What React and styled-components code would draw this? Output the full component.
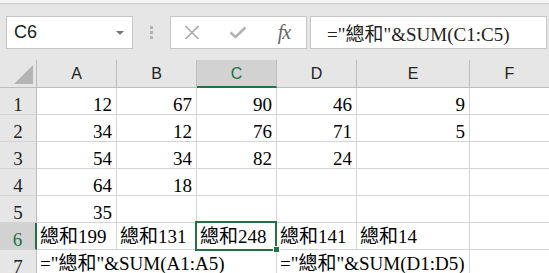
import React from "react";
import styled, { createGlobalStyle, css } from "styled-components";

const GlobalStyle = createGlobalStyle`
  html, body {
    margin: 0;
    padding: 0;
    background: #e6e6e6;
  }
  #root {
    width: 549px;
    height: 273px;
    overflow: hidden;
  }
`;

const GREEN = "#217346";
const GRID = "#d4d4d4";
const HEAD_LINE = "#bdbdbd";

const Window = styled.div`
  width: 549px;
  height: 273px;
  overflow: hidden;
  background: #e6e6e6;
  display: flex;
  flex-direction: column;
`;

const TopStrip = styled.div`
  height: 3px;
  flex: none;
  background: #f3f3f3;
  box-shadow: 0 1px 1px rgba(0, 0, 0, 0.12);
`;

const Toolbar = styled.div`
  height: 57px;
  flex: none;
  box-sizing: border-box;
  padding: 13px 2px 11px 6px;
  display: flex;
  align-items: stretch;
`;

const NameBox = styled.div`
  width: 127px;
  box-sizing: border-box;
  border: 1px solid #c6c6c6;
  background: #fff;
  display: flex;
  align-items: center;
  justify-content: space-between;
  padding: 0 8px 0 7px;
  font-family: "Liberation Sans", sans-serif;
  font-size: 18px;
  color: #222;
`;

const Caret = styled.span`
  width: 0;
  height: 0;
  border-left: 4px solid transparent;
  border-right: 4px solid transparent;
  border-top: 4px solid #777;
  margin-top: 1px;
`;

const Grip = styled.div`
  width: 3px;
  margin: 0 17px;
  display: flex;
  flex-direction: column;
  justify-content: center;
  gap: 2px;
`;

const Dot = styled.span`
  width: 3px;
  height: 3px;
  background: #b3b3b3;
`;

const FxBox = styled.div`
  width: 137px;
  box-sizing: border-box;
  border: 1px solid #c6c6c6;
  background: #fff;
  display: flex;
  align-items: center;
  padding-left: 9px;
  gap: 22px;
`;

const IconSlot = styled.span`
  width: 24px;
  display: flex;
  justify-content: center;
  align-items: center;
`;

const FxLabel = styled.span`
  font-family: "Liberation Serif", serif;
  font-style: italic;
  font-size: 20px;
  color: #666;
  letter-spacing: -1px;
  line-height: 1;
  margin-bottom: 2px;
`;

const FormulaInput = styled.div`
  flex: 1;
  margin-left: 3px;
  box-sizing: border-box;
  border: 1px solid #c6c6c6;
  background: #fff;
  display: flex;
  align-items: center;
  padding-left: 16px;
  font-family: "Liberation Serif", "Noto Sans CJK TC", serif;
  font-size: 19px;
  color: #222;
  white-space: nowrap;
`;

const Sheet = styled.div`
  flex: none;
  display: grid;
  grid-template-columns: 37px 80px 80px 80px 80px 113px 80px;
  grid-template-rows: 28px repeat(7, 27px);
  width: 550px;
  background: #fff;
`;

const Corner = styled.div`
  background: #e6e6e6;
  border-right: 1px solid ${HEAD_LINE};
  border-bottom: 1px solid ${HEAD_LINE};
  display: flex;
  align-items: flex-end;
  justify-content: flex-end;
  padding: 0 3px 3px 0;
`;

const ColHead = styled.div`
  background: ${(p) => (p.$active ? "#d2d2d2" : "#e6e6e6")};
  border-right: 1px solid ${HEAD_LINE};
  border-bottom: ${(p) => (p.$active ? `2px solid ${GREEN}` : `1px solid ${HEAD_LINE}`)};
  display: flex;
  align-items: center;
  justify-content: center;
  padding-top: 1px;
  font-family: "Liberation Sans", sans-serif;
  font-size: 16px;
  color: ${(p) => (p.$active ? GREEN : "#222")};
`;

const RowHead = styled.div`
  background: ${(p) => (p.$active ? "#d2d2d2" : "#e6e6e6")};
  border-right: ${(p) => (p.$active ? `2px solid ${GREEN}` : `1px solid ${HEAD_LINE}`)};
  border-bottom: 1px solid ${GRID};
  display: flex;
  align-items: flex-end;
  justify-content: center;
  font-family: "Liberation Serif", serif;
  font-size: 19px;
  line-height: 19px;
  color: ${(p) => (p.$active ? GREEN : "#222")};
`;

const Cell = styled.div`
  position: relative;
  border-right: ${(p) => (p.$open ? "none" : `1px solid ${GRID}`)};
  border-bottom: 1px solid ${GRID};
  display: flex;
  align-items: flex-end;
  justify-content: ${(p) => (p.$num ? "flex-end" : "flex-start")};
  padding: 0 ${(p) => (p.$num ? "4px" : "3px")} ${(p) => (p.$cjk ? "3px" : "0")};
  font-family: "Liberation Serif", "Noto Sans CJK TC", serif;
  font-size: 19px;
  line-height: 19px;
  color: #000;
  white-space: nowrap;
  overflow: visible;
  min-width: 0;
  ${(p) =>
    p.$selected &&
    css`
      &::after {
        content: "";
        position: absolute;
        top: -2px;
        left: -2px;
        right: -1px;
        bottom: -2px;
        border: 2px solid ${GREEN};
        pointer-events: none;
      }
      &::before {
        content: "";
        position: absolute;
        right: -4px;
        bottom: -4px;
        width: 5px;
        height: 5px;
        background: ${GREEN};
        border: 1px solid #fff;
        z-index: 2;
      }
    `}
`;

const CellText = styled.span`
  position: relative;
  z-index: 1;
`;

const columns = ["A", "B", "C", "D", "E", "F"];

const rows = [
  ["12", "67", "90", "46", "9", ""],
  ["34", "12", "76", "71", "5", ""],
  ["54", "34", "82", "24", "", ""],
  ["64", "18", "", "", "", ""],
  ["35", "", "", "", "", ""],
  ["總和199", "總和131", "總和248", "總和141", "總和14", ""],
  ['="總和"&SUM(A1:A5)', "", "", '="總和"&SUM(D1:D5)', "", ""],
];

// cells in row 7 whose right edge is covered by spilled text
const openCells = { "7-0": true, "7-1": true, "7-3": true };

function CloseIcon() {
  return (
    <svg width="16" height="15" viewBox="0 0 16 15">
      <path d="M1.5 1 L14.5 14 M14.5 1 L1.5 14" stroke="#a6a6a6" strokeWidth="1.6" fill="none" />
    </svg>
  );
}

function CheckIcon() {
  return (
    <svg width="18" height="13" viewBox="0 0 18 13">
      <path d="M1.5 6.5 L6.5 11 L16.5 1.5" stroke="#b3b3b3" strokeWidth="2.6" fill="none" />
    </svg>
  );
}

function CornerMark() {
  return (
    <svg width="19" height="19" viewBox="0 0 19 19">
      <polygon points="0,19 19,0 19,19" fill="#b4b4b4" />
    </svg>
  );
}

export default function App() {
  return (
    <>
      <GlobalStyle />
      <Window>
        <TopStrip />
        <Toolbar>
          <NameBox>
            <span>C6</span>
            <Caret />
          </NameBox>
          <Grip>
            <Dot />
            <Dot />
            <Dot />
          </Grip>
          <FxBox>
            <IconSlot>
              <CloseIcon />
            </IconSlot>
            <IconSlot>
              <CheckIcon />
            </IconSlot>
            <IconSlot>
              <FxLabel>fx</FxLabel>
            </IconSlot>
          </FxBox>
          <FormulaInput>="總和"&amp;SUM(C1:C5)</FormulaInput>
        </Toolbar>
        <Sheet>
          <Corner>
            <CornerMark />
          </Corner>
          {columns.map((c) => (
            <ColHead key={c} $active={c === "C"}>
              {c}
            </ColHead>
          ))}
          {rows.map((row, r) => (
            <React.Fragment key={`row-${r}`}>
              <RowHead $active={r === 5}>{r + 1}</RowHead>
              {row.map((val, c) => {
                const isNum = /^\d+$/.test(val);
                const isCjk = /[\u4e00-\u9fff]/.test(val);
                return (
                  <Cell
                    key={`c-${r}-${c}`}
                    $num={isNum}
                    $cjk={isCjk || r >= 5}
                    $open={openCells[`${r + 1}-${c}`]}
                    $selected={r === 5 && c === 2}
                  >
                    {val && <CellText>{val}</CellText>}
                  </Cell>
                );
              })}
            </React.Fragment>
          ))}
        </Sheet>
      </Window>
    </>
  );
}
